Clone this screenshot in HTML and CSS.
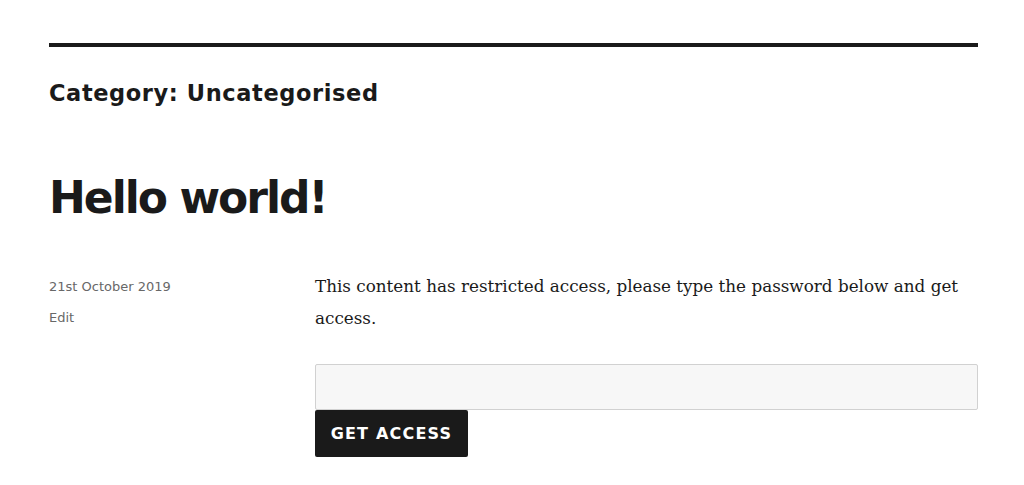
FILE: index.html
```html
<!DOCTYPE html>
<html lang="en">
<head>
<meta charset="utf-8">
<title>Uncategorised</title>
<link rel="stylesheet" href="styles.css">
</head>
<body>
<main class="page">
  <header class="archive-header">
    <h1 class="page-title">Category: Uncategorised</h1>
  </header>
  <article class="post">
    <h2 class="entry-title">Hello world!</h2>
    <div class="entry-body">
      <footer class="entry-footer">
        <span class="posted-on">21st October 2019</span>
        <a class="edit-link" href="#">Edit</a>
      </footer>
      <div class="entry-content">
        <p class="notice">This content has restricted access, please type the password below and get access.</p>
        <form class="access-form">
          <input class="access-input" type="password" aria-label="Password">
          <button class="access-button" type="button">Get Access</button>
        </form>
      </div>
    </div>
  </article>
</main>
</body>
</html>
```

FILE: styles.css
```css
html, body {
  margin: 0;
  padding: 0;
  background: #ffffff;
}

body {
  color: #1a1a1a;
  font-family: "DejaVu Sans", "Inter", sans-serif;
}

.page {
  width: 929px;
  padding: 43px 0 0 49px;
}

.archive-header {
  border-top: 4px solid #1a1a1a;
  padding-top: 32px;
}

.page-title {
  margin: 0;
  font-size: 22.5px;
  line-height: 28px;
  font-weight: 700;
  letter-spacing: 0.6px;
}

.entry-title {
  margin: 64px 0 0;
  font-size: 44px;
  line-height: 54px;
  font-weight: 700;
  letter-spacing: -2px;
}

.entry-body {
  display: grid;
  grid-template-columns: 266px 1fr;
  margin-top: 46px;
}

.entry-footer {
  display: flex;
  flex-direction: column;
  align-items: flex-start;
  gap: 10px;
  padding-top: 5px;
  font-size: 13px;
  line-height: 21px;
  color: #686868;
}

.edit-link {
  color: #686868;
  text-decoration: none;
}

.entry-content {
  min-width: 0;
}

.notice {
  margin: 0 0 30px;
  font-family: "DejaVu Serif", "Liberation Serif", serif;
  font-size: 16.8px;
  line-height: 31.5px;
  color: #1a1a1a;
}

.access-form {
  display: flex;
  flex-direction: column;
  align-items: flex-start;
}

.access-input {
  box-sizing: border-box;
  width: 100%;
  height: 46px;
  margin: 0;
  background: #f7f7f7;
  border: 1px solid #d1d1d1;
  border-radius: 2px;
}

.access-button {
  box-sizing: border-box;
  height: 47px;
  width: 153px;
  margin: 0;
  padding: 0;
  background: #1a1a1a;
  color: #ffffff;
  border: 0;
  border-radius: 2px;
  font-family: "DejaVu Sans", "Inter", sans-serif;
  font-size: 16px;
  font-weight: 700;
  letter-spacing: 1.2px;
  text-transform: uppercase;
}
```
